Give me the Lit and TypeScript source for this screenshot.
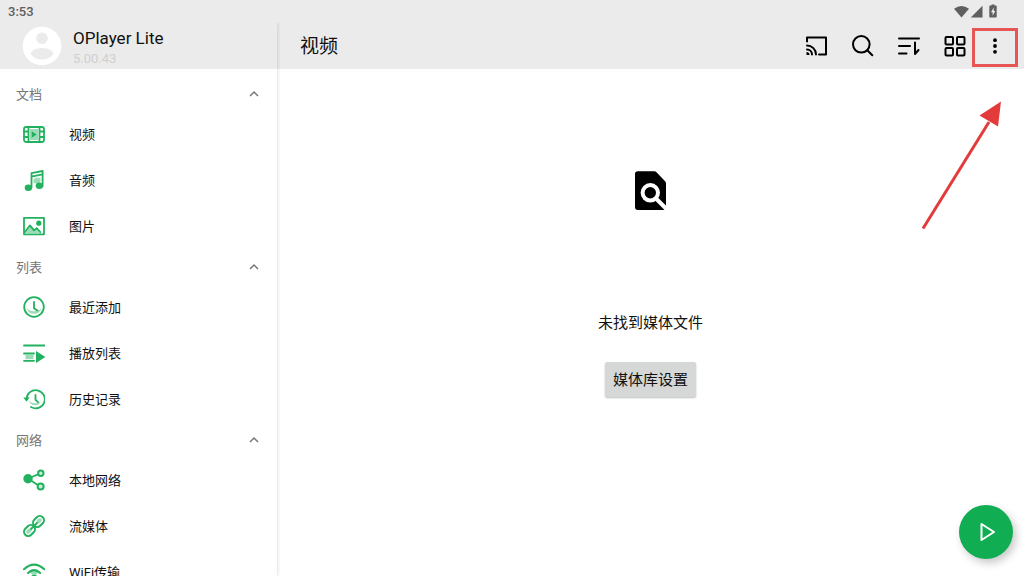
import { LitElement, html, svg, css } from "lit";
import { customElement, state } from "lit/decorators.js";

const icons = {
  video: svg`<rect x="1" y="4" width="20" height="15" rx="2.2"/><path d="M5.5 4v15M16.5 4v15M1 8.5h4.5M1 14h4.5M16.5 8.5H21M16.5 14H21"/><rect class="tint" x="7" y="6" width="8" height="11"/><path class="fill" d="M8.7 8.3l5 3.2-5 3.2z"/>`,
  audio: svg`<path d="M8.500 18V4.200L19.600 2v15M8.500 7.600l11-2.200"/><path class="tint" d="M10.500 10.300l2-1.500h5v4l-2 1.500h-5z"/><ellipse class="fill" cx="5.400" cy="18.800" rx="3.700" ry="3.200"/><ellipse class="fill" cx="16.400" cy="16.800" rx="3.700" ry="3.200"/>`,
  image: svg`<rect x="1" y="2.800" width="20" height="16.500"/><path class="tint" d="M2.500 18l5-6.500 3.300 4 2.200-2 3 4.500z"/><path d="M2 17l5-6.600 4 5 2.700-2.200 3.500 4"/><circle class="fill" cx="15.800" cy="8.200" r="2.600"/>`,
  recent: svg`<circle cx="11" cy="11" r="9.800"/><path class="tint" d="M3.500 12.500a8 8 0 0 0 15 0 9 6 0 0 1-15 0z"/><path d="M11 6v6.200l3.400 2.200"/>`,
  playlist: svg`<path d="M1 3.500h20.500M1 11.500h10M1 18.800h10"/><rect class="tint" x="2.500" y="13" width="8" height="4.200"/><path class="fill" d="M13 9l9.300 6-9.300 6z"/>`,
  history: svg`<path d="M3.600 11a9.100 9.100 0 1 1 4.400 8"/><path class="fill" d="M.300 9.500h6.400l-3.200 4.200z"/><path class="tint" d="M6 12.500a6.300 6.300 0 0 0 12 .5 7 5 0 0 1-12-.5z"/><path d="M12.500 6.800v5l2.500 2.400"/>`,
  network: svg`<path d="M5 9.500l12-4.800M5 9.500l12 8"/><circle class="fill" cx="5" cy="9.700" r="4.700"/><circle class="node" cx="17.800" cy="4.300" r="2.700"/><circle class="node" cx="17.600" cy="17.500" r="3"/>`,
  stream: svg`<rect class="link" x="-6" y="-4.200" width="12" height="8.400" rx="4.200" transform="translate(15.500 6.500) rotate(-45)"/><rect class="link" x="-6" y="-4.200" width="12" height="8.400" rx="4.200" transform="translate(6.500 15.500) rotate(-45)"/><ellipse class="tint" cx="16" cy="6" rx="3.200" ry="2" transform="rotate(-45 16 6)"/><ellipse class="tint" cx="6" cy="16" rx="3.200" ry="2" transform="rotate(-45 6 16)"/><path d="M8 14l6-6"/>`,
  wifi: svg`<path class="wide" d="M1 8.200q10-9.200 20.300 0"/><path class="tint" d="M6 10.500q5-5 10.500 0l-5.300 5z"/><path class="wide" d="M5 12q6-5.800 12.200 0"/><path class="fill" d="M8.200 15q3-2.500 6 0l-3 3.500z"/>`,
};

const sections = [
  { title: "文档", items: [["视频", icons.video], ["音频", icons.audio], ["图片", icons.image]] },
  { title: "列表", items: [["最近添加", icons.recent], ["播放列表", icons.playlist], ["历史记录", icons.history]] },
  { title: "网络", items: [["本地网络", icons.network], ["流媒体", icons.stream], ["WiFi传输", icons.wifi]] },
] as const;

const tools = [
  ["投屏", svg`<path d="M2 7.500V3.500h19v17h-7"/><path d="M2 11.500a9 9 0 0 1 9 9M2 15.500a5 5 0 0 1 5 5"/><path class="solid" d="M1.500 18v3h3a3 3 0 0 0-3-3z"/>`],
  ["搜索", svg`<circle cx="10.300" cy="10.300" r="8.300"/><path d="M16.300 16.300l5 5"/>`],
  ["排序", svg`<path d="M2 4.500h20M2 12h11M2 19.500h7.500M18 8.500v11.500l3.500-4"/>`],
  ["网格视图", svg`<rect x="2.500" y="3" width="7.500" height="7.500" rx="1"/><rect x="14" y="3" width="7.500" height="7.500" rx="1"/><rect x="2.500" y="14" width="7.500" height="7.500" rx="1"/><rect x="14" y="14" width="7.500" height="7.500" rx="1"/>`],
] as const;

@customElement("app-root")
export class AppRoot extends LitElement {
  @state() private closed: string[] = [];

  static styles = css`
    :host {
      display: flex;
      flex-direction: column;
      position: relative;
      height: 100vh;
      overflow: hidden;
      background: #fff;
      color: #111;
      font-family: Roboto, "Noto Sans CJK SC", sans-serif;
    }
    * { box-sizing: border-box; }
    button { border: 0; padding: 0; background: none; color: inherit; font: inherit; cursor: pointer; }
    svg { display: block; flex: none; }
    .status {
      display: flex;
      align-items: center;
      justify-content: space-between;
      flex: none;
      height: 23px;
      padding: 0 24px 0 8px;
      background: #ebebeb;
      color: #5f5f5f;
      font-size: 13px;
      font-weight: 500;
      line-height: 24px;
    }
    .body { display: flex; flex: 1; min-height: 0; }
    .side {
      width: 277px;
      flex: none;
      overflow: hidden;
      position: relative;
      z-index: 1;
      box-shadow: 1px 0 3px rgba(0, 0, 0, 0.12);
      clip-path: inset(0 -6px 0 0);
    }
    .profile {
      display: flex;
      align-items: center;
      gap: 11px;
      height: 46px;
      padding-left: 22px;
      background: #ebebeb;
    }
    .who { padding-top: 3px; }
    .name { font-size: 17px; line-height: 22px; }
    .version { font-size: 13px; line-height: 20px; color: #cfcfcf; }
    .nav { padding-top: 7px; }
    .heading {
      display: flex;
      align-items: center;
      justify-content: space-between;
      width: 100%;
      height: 35px;
      padding: 0 18px 0 16px;
      color: #767676;
      font-size: 13px;
    }
    .heading svg { fill: none; stroke: #777; stroke-width: 1.5; }
    .shut svg { transform: rotate(180deg); }
    .item {
      display: flex;
      align-items: center;
      gap: 24px;
      height: 46px;
      padding-left: 23px;
      color: #111;
      font-size: 13px;
      text-decoration: none;
    }
    .label { padding-bottom: 2px; }
    .item svg { fill: none; stroke: #22b25f; stroke-width: 1.8; stroke-linecap: round; stroke-linejoin: round; }
    .item .fill { fill: #22b25f; stroke: none; }
    .item .tint { fill: #9bdcb6; stroke: none; }
    .item .node { fill: #c9eed8; stroke-width: 2; }
    .item .link { stroke-width: 2; }
    .item .wide { stroke-width: 2; }
    .main { display: flex; flex: 1; flex-direction: column; min-width: 0; }
    .bar {
      display: flex;
      align-items: center;
      height: 46px;
      flex: none;
      padding: 0 12px 0 23px;
      background: #ebebeb;
    }
    .title { flex: 1; margin: 0; padding-top: 2px; font-size: 19px; font-weight: 400; line-height: 28px; }
    .tool { display: grid; place-items: center; width: 46px; height: 46px; }
    .tool svg { fill: none; stroke: #000; stroke-width: 2; stroke-linecap: round; stroke-linejoin: round; }
    .tool .solid { fill: #000; stroke: none; }
    .more { width: 34px; position: relative; }
    .more .dots { fill: #000; stroke: none; }
    .more::after {
      content: "";
      position: absolute;
      inset: 5px -6px 2px;
      border: 3px solid #e75555;
    }
    .empty {
      display: flex;
      flex: 1;
      flex-direction: column;
      align-items: center;
      padding-top: 98px;
    }
    .message { margin: 98px 0 27px; font-size: 15px; line-height: 24px; }
    .settings {
      height: 35px;
      padding: 0 8px 2px;
      border-radius: 2px;
      background: #d6d7d7;
      box-shadow: 0 1px 2px rgba(0, 0, 0, 0.25);
      font-size: 15px;
    }
    .fab {
      display: grid;
      place-items: center;
      position: absolute;
      right: 11px;
      bottom: 17px;
      width: 54px;
      height: 54px;
      border-radius: 50%;
      background: #10ad53;
      box-shadow: 3px 4px 8px rgba(0, 0, 0, 0.22);
    }
    .arrow { position: absolute; top: 100px; right: 22px; pointer-events: none; }
  `;

  private toggle(title: string) {
    this.closed = this.closed.includes(title)
      ? this.closed.filter((t) => t !== title)
      : [...this.closed, title];
  }

  render() {
    return html`
      <div class="status">
        <span>3:53</span>
        <svg width="46" height="16" viewBox="0 0 46 16" fill="#5f5f5f">
          <path d="M0 4.800q7.500-5.600 15 0L7.500 13.500z" />
          <path d="M28.500 1.800V13.500H16.800z" />
          <path d="M37.500 1.500v-1h3v1h1.500q.700 0 .700.700v10.600q0 .700-.700.700h-6q-.700 0-.700-.700V2.200q0-.700.700-.700z" />
          <path fill="#ebebeb" d="M39.700 3.500l-2.700 4.700h1.600v3.600l2.700-4.900h-1.600z" />
        </svg>
      </div>
      <div class="body">
        <aside class="side">
          <div class="profile">
            <svg width="40" height="40" viewBox="0 0 40 40">
              <circle cx="20" cy="20" r="19.300" fill="#fff" />
              <circle cx="20" cy="12.300" r="5.800" fill="#ebebeb" />
              <path fill="#ebebeb" d="M8.500 28Q10 22 20 22t11.500 6Q27.500 33.500 20 33.500T8.500 28z" />
            </svg>
            <div class="who">
              <div class="name">OPlayer Lite</div>
              <div class="version">5.00.43</div>
            </div>
          </div>
          <nav class="nav">
            ${sections.map((s) => {
              const shut = this.closed.includes(s.title);
              return html`
                <button class="heading ${shut ? "shut" : ""}" aria-expanded=${shut ? "false" : "true"} @click=${() => this.toggle(s.title)}>
                  <span>${s.title}</span>
                  <svg width="10" height="8" viewBox="0 0 10 8"><path d="M1 6l4-4 4 4" /></svg>
                </button>
                ${shut ? "" : s.items.map(([label, icon]) => html`
                  <a class="item" href="#"><svg width="22" height="22" viewBox="0 0 22 22">${icon}</svg><span class="label">${label}</span></a>`)}
              `;
            })}
          </nav>
        </aside>
        <main class="main">
          <header class="bar">
            <h1 class="title">视频</h1>
            ${tools.map(([label, icon]) => html`
              <button class="tool" aria-label=${label}><svg width="24" height="24" viewBox="0 0 24 24">${icon}</svg></button>`)}
            <button class="tool more" aria-label="更多">
              <svg width="6" height="18" viewBox="0 0 6 18"><g class="dots"><circle cx="3" cy="3.200" r="1.900" /><circle cx="3" cy="9" r="1.900" /><circle cx="3" cy="14.800" r="1.900" /></g></svg>
            </button>
          </header>
          <section class="empty">
            <svg width="46" height="46" viewBox="0 0 46 46">
              <path d="M9.800 4.300h16.500q1.300 0 2.200.900l8.600 9q.900.900.900 2V40q0 2.900-2.700 2.900H9.800Q7 42.900 7 40V7.100Q7 4.300 9.800 4.300z" />
              <circle cx="22.300" cy="25.800" r="7.700" fill="none" stroke="#fff" stroke-width="4" />
              <path d="M27.500 31l12 12" stroke="#fff" stroke-width="4" />
            </svg>
            <p class="message">未找到媒体文件</p>
            <button class="settings">媒体库设置</button>
          </section>
        </main>
      </div>
      <svg class="arrow" width="82" height="130" viewBox="0 0 82 130">
        <path d="M3 128.500L69 22" fill="none" stroke="#e33b3b" stroke-width="3" />
        <path d="M81 1.500L59.500 15.500L78 26.500z" fill="#e33b3b" />
      </svg>
      <button class="fab" aria-label="播放">
        <svg width="24" height="24" viewBox="0 0 24 24" fill="none" stroke="#fff" stroke-width="2" stroke-linejoin="round"><path d="M7.500 4l12.500 8-12.500 8z" /></svg>
      </button>
    `;
  }
}
